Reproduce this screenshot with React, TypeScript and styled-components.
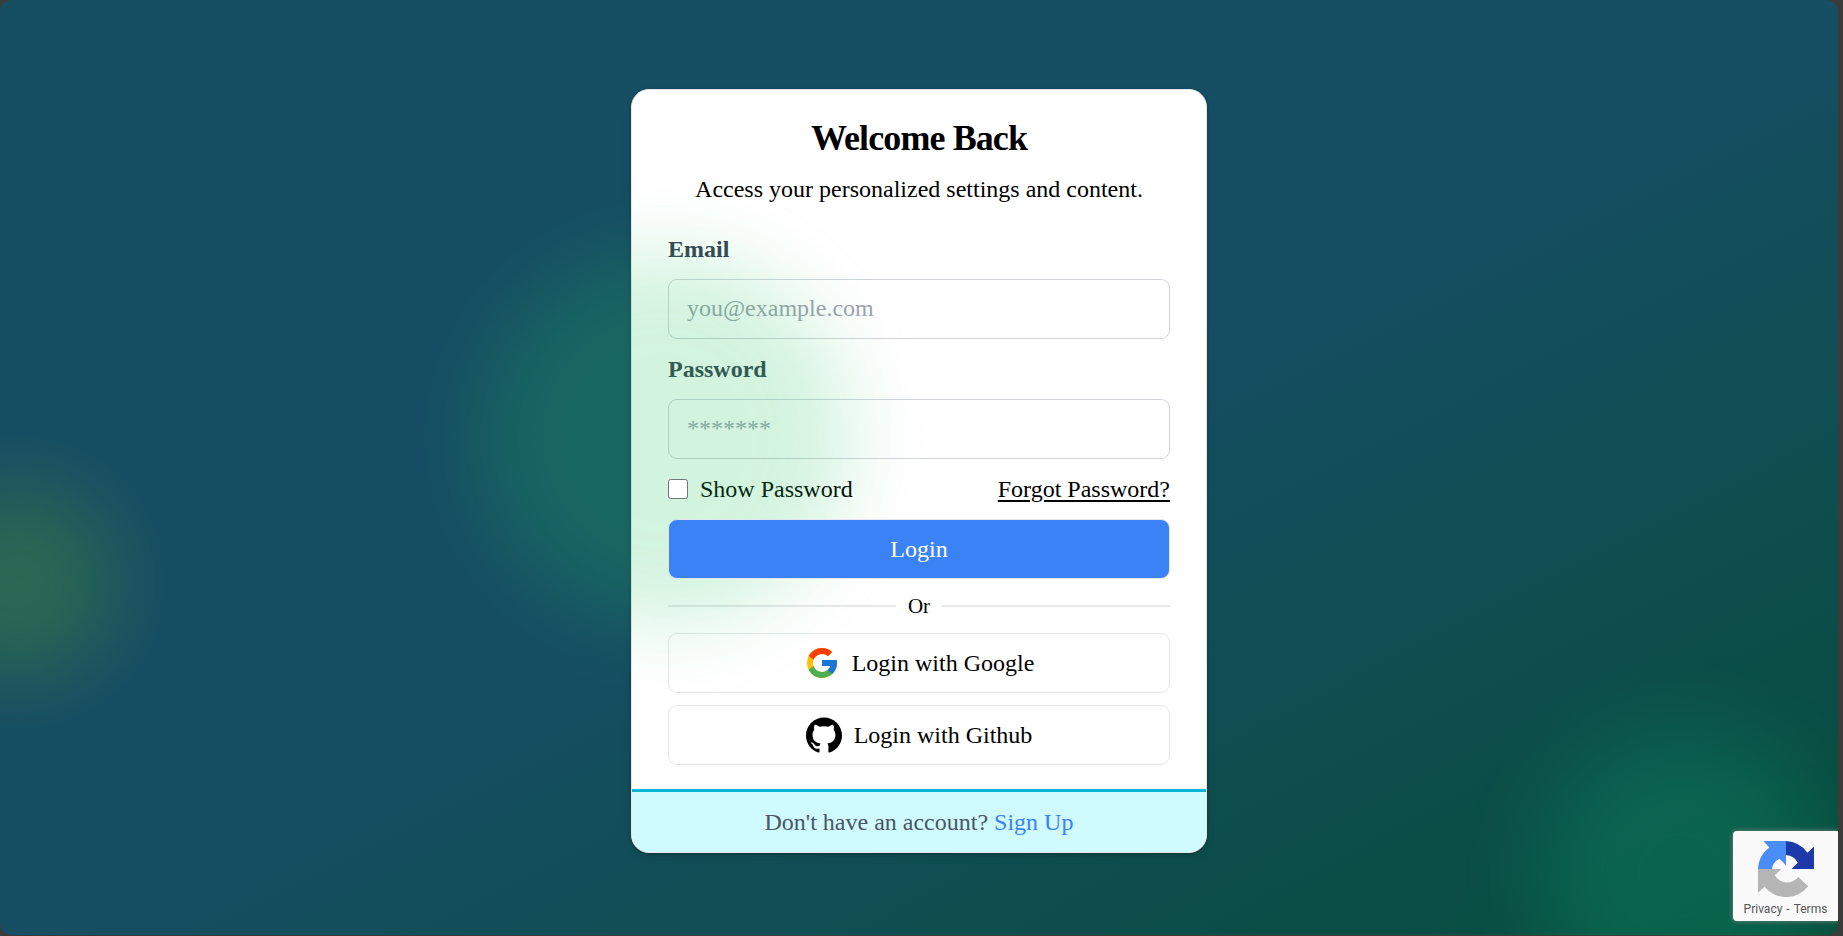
import React, { useState } from "react";
import styled, { createGlobalStyle } from "styled-components";

const GlobalStyle = createGlobalStyle`
  *, *::before, *::after { box-sizing: border-box; }
  body {
    margin: 0;
    background: #3b3b3b;
    font-family: "Liberation Serif", "Times New Roman", serif;
    font-size: 24px;
    line-height: 36px;
    color: #000;
  }
  h1, p { margin: 0; }
`;

const Page = styled.main`
  position: relative;
  min-height: calc(100vh - 1px);
  margin-right: 5px;
  border-radius: 12px;
  overflow: hidden;
  display: flex;
  align-items: center;
  justify-content: center;
  padding-top: 6px;
  background: linear-gradient(to bottom right, #164e63 50%, #064e3b);
`;

const Glow = styled.div<{ $size: number; $color: string }>`
  position: absolute;
  width: ${(p) => p.$size}px;
  height: ${(p) => p.$size}px;
  border-radius: 50%;
  background: ${(p) => p.$color};
  opacity: 0.2;
  filter: blur(40px);
  pointer-events: none;
`;

const CenterGlow = styled(Glow)`
  left: 25%;
  top: 25%;
  margin: 18px 0 0 18px;
`;

const LeftGlow = styled(Glow)`
  left: -78px;
  top: 50%;
  margin-top: 18px;
`;

const CornerGlow = styled(Glow)`
  right: 12px;
  bottom: -84px;
`;

const Card = styled.section`
  width: 100%;
  max-width: 576px;
  border: 1px solid #e5e7eb;
  border-radius: 18px;
  background: #fff;
  overflow: hidden;
  box-shadow: 0 1px 3px rgba(0, 0, 0, 0.2), 0 4px 8px rgba(0, 0, 0, 0.1);
`;

const CardBody = styled.form`
  display: flex;
  flex-direction: column;
  gap: 12px;
  padding: 24px 36px;
`;

const Header = styled.header`
  text-align: center;
  padding-bottom: 12px;
`;

const Title = styled.h1`
  font-size: 36px;
  line-height: 48px;
  letter-spacing: -0.025em;
  padding-bottom: 9px;
`;

const Field = styled.div`
  display: flex;
  flex-direction: column;
  gap: 12px;
`;

const Label = styled.label`
  font-weight: 700;
  color: #374151;
`;

const TextInput = styled.input`
  width: 100%;
  height: 60px;
  padding: 0 18px;
  border: 1px solid #d1d5db;
  border-radius: 9px;
  background: #fff;
  font: inherit;
  &::placeholder { color: #9ca3af; opacity: 1; }
`;

const Options = styled.div`
  display: flex;
  align-items: center;
  justify-content: space-between;
`;

const CheckLabel = styled.label`
  display: flex;
  align-items: center;
  gap: 12px;
`;

const Checkbox = styled.input`
  position: relative;
  z-index: 1;
  width: 20px;
  height: 20px;
  margin: 0;
`;

const ForgotLink = styled.a`
  color: inherit;
  text-decoration: underline;
  text-decoration-thickness: 2px;
  text-underline-offset: 3px;
`;

const Button = styled.button`
  display: flex;
  align-items: center;
  justify-content: center;
  gap: 12px;
  width: 100%;
  height: 60px;
  border: 1px solid #e5e7eb;
  border-radius: 9px;
  background: #fff;
  color: #000;
  font: inherit;
  cursor: pointer;
`;

const PrimaryButton = styled(Button)`
  position: relative;
  z-index: 1;
  background: #3b82f6;
  color: #fff;
`;

const Divider = styled.div`
  display: flex;
  align-items: center;
  gap: 12px;
  font-size: 21px;
  line-height: 30px;
  &::before, &::after {
    content: "";
    flex: 1;
    height: 2px;
    background: #e5e7eb;
  }
`;

const Footer = styled.footer`
  border-top: 3px solid #06b6d4;
  background: #cffafe;
  padding: 12px;
  text-align: center;
  color: #4b5563;
`;

const SignUpLink = styled.a`
  color: #3b82f6;
  text-decoration: none;
`;

const Captcha = styled.aside`
  position: absolute;
  right: 0;
  bottom: 14px;
  width: 105px;
  height: 90px;
  padding-top: 10px;
  border-radius: 4px 0 0 4px;
  background: #f9f9f9;
  box-shadow: 0 0 5px #808080;
  display: flex;
  flex-direction: column;
  align-items: center;
  font: 12px/24px Roboto, sans-serif;
  color: #555;
`;

const CaptchaLinks = styled.div`
  display: flex;
  gap: 4px;
  a { color: inherit; text-decoration: none; }
`;

const GoogleIcon = () => (
  <svg width="36" height="36" viewBox="0 0 48 48" aria-hidden="true">
    <path fill="#FFC107" d="M43.611 20.083H42V20H24v8h11.303c-1.649 4.657-6.08 8-11.303 8-6.627 0-12-5.373-12-12s5.373-12 12-12c3.059 0 5.842 1.154 7.961 3.039l5.657-5.657C34.046 6.053 29.268 4 24 4 12.955 4 4 12.955 4 24s8.955 20 20 20 20-8.955 20-20c0-1.341-.138-2.65-.389-3.917z" />
    <path fill="#FF3D00" d="m6.306 14.691 6.571 4.819C14.655 15.108 18.961 12 24 12c3.059 0 5.842 1.154 7.961 3.039l5.657-5.657C34.046 6.053 29.268 4 24 4 16.318 4 9.656 8.337 6.306 14.691z" />
    <path fill="#4CAF50" d="M24 44c5.166 0 9.86-1.977 13.409-5.192l-6.19-5.238A11.91 11.91 0 0 1 24 36c-5.202 0-9.619-3.317-11.283-7.946l-6.522 5.025C9.505 39.556 16.227 44 24 44z" />
    <path fill="#1976D2" d="M43.611 20.083H42V20H24v8h11.303a12.04 12.04 0 0 1-4.087 5.571l.003-.002 6.19 5.238C36.971 39.205 44 34 44 24c0-1.341-.138-2.65-.389-3.917z" />
  </svg>
);

const GithubIcon = () => (
  <svg width="36" height="36" viewBox="0 0 24 24" aria-hidden="true">
    <path d="M12 .297c-6.63 0-12 5.373-12 12 0 5.303 3.438 9.8 8.205 11.385.6.113.82-.258.82-.577 0-.285-.01-1.04-.015-2.04-3.338.724-4.042-1.61-4.042-1.61C4.422 18.07 3.633 17.7 3.633 17.7c-1.087-.744.084-.729.084-.729 1.205.084 1.838 1.236 1.838 1.236 1.07 1.835 2.809 1.305 3.495.998.108-.776.417-1.305.76-1.605-2.665-.3-5.466-1.332-5.466-5.93 0-1.31.465-2.38 1.235-3.22-.135-.303-.54-1.523.105-3.176 0 0 1.005-.322 3.3 1.23.96-.267 1.98-.399 3-.405 1.02.006 2.04.138 3 .405 2.28-1.552 3.285-1.23 3.285-1.23.645 1.653.24 2.873.12 3.176.765.84 1.23 1.91 1.23 3.22 0 4.61-2.805 5.625-5.475 5.92.42.36.81 1.096.81 2.22 0 1.606-.015 2.896-.015 3.286 0 .315.21.69.825.57C20.565 22.092 24 17.592 24 12.297c0-6.627-5.373-12-12-12" />
  </svg>
);

const RecaptchaLogo = () => (
  <svg width="56" height="56" viewBox="0 0 64 64" aria-hidden="true">
    <path fill="#1c3aa9" d="M32 0a32 32 0 0 1 24.5 13.5L64 6.3V32H38.3l7.2-7.2A16 16 0 0 0 32 16z" />
    <path fill="#4a8df8" d="M6.3 0H32v27.8l-7.4-7.6A15 15 0 0 0 16 32H0A32 32 0 0 1 12.9 7.4z" />
    <path fill="#b5b5b5" d="M0 32h26.8l-7.6 7.2A16 16 0 0 0 46 41.2l11.3 10.6A32 32 0 0 1 7.4 52.4L0 59.2z" />
  </svg>
);

export default function App() {
  const [show, setShow] = useState(false);
  return (
    <>
      <GlobalStyle />
      <Page>
        <Card>
          <CardBody onSubmit={(e) => e.preventDefault()}>
            <Header>
              <Title>Welcome Back</Title>
              <p>Access your personalized settings and content.</p>
            </Header>
            <Field>
              <Label htmlFor="email">Email</Label>
              <TextInput id="email" type="email" placeholder="you@example.com" />
            </Field>
            <Field>
              <Label htmlFor="password">Password</Label>
              <TextInput id="password" type={show ? "text" : "password"} placeholder="*******" />
            </Field>
            <Options>
              <CheckLabel>
                <Checkbox type="checkbox" checked={show} onChange={(e) => setShow(e.target.checked)} />
                Show Password
              </CheckLabel>
              <ForgotLink href="#forgot">Forgot Password?</ForgotLink>
            </Options>
            <PrimaryButton type="submit">Login</PrimaryButton>
            <Divider>Or</Divider>
            <Button type="button"><GoogleIcon />Login with Google</Button>
            <Button type="button"><GithubIcon />Login with Github</Button>
          </CardBody>
          <Footer>
            Don't have an account? <SignUpLink href="#signup">Sign Up</SignUpLink>
          </Footer>
        </Card>
        <CenterGlow $size={372} $color="#22c55e" />
        <LeftGlow $size={192} $color="#84cc16" />
        <CornerGlow $size={288} $color="#10b981" />
        <Captcha>
          <RecaptchaLogo />
          <CaptchaLinks>
            <a href="#privacy">Privacy</a>
            <span>-</span>
            <a href="#terms">Terms</a>
          </CaptchaLinks>
        </Captcha>
      </Page>
    </>
  );
}
